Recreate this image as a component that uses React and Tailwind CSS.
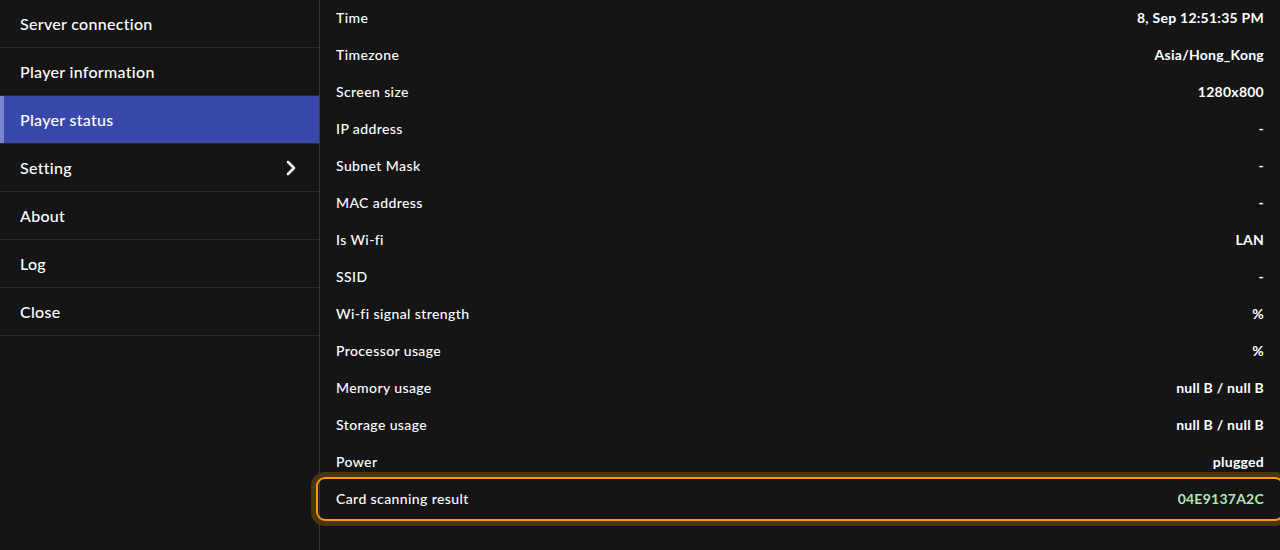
import React from "react";
import { ChevronRight } from "lucide-react";

const menu = [
  { label: "Server connection" },
  { label: "Player information" },
  { label: "Player status", active: true },
  { label: "Setting", chevron: true },
  { label: "About" },
  { label: "Log" },
  { label: "Close" },
];

const rows = [
  ["Time", "8, Sep 12:51:35 PM"],
  ["Timezone", "Asia/Hong_Kong"],
  ["Screen size", "1280x800"],
  ["IP address", "-"],
  ["Subnet Mask", "-"],
  ["MAC address", "-"],
  ["Is Wi-fi", "LAN"],
  ["SSID", "-"],
  ["Wi-fi signal strength", "%"],
  ["Processor usage", "%"],
  ["Memory usage", "null B / null B"],
  ["Storage usage", "null B / null B"],
  ["Power", "plugged"],
];

export default function App() {
  return (
    <div
      className="flex w-[1280px] h-[550px] overflow-hidden bg-[#151515] text-white"
      style={{ fontFamily: "Lato, 'Noto Sans', sans-serif" }}
    >
      <aside className="w-[320px] shrink-0 border-r border-[#3a3a3a] flex flex-col">
        {menu.map((m) => (
          <div
            key={m.label}
            className={
              m.active
                ? "relative h-[48px] flex items-center justify-between pl-[20px] pr-[16px] bg-[#3949ab] border-b border-[#2a2a2a] text-[16px] font-medium tracking-[0.3px]"
                : "relative h-[48px] flex items-center justify-between pl-[20px] pr-[16px] border-b border-[#2a2a2a] text-[16px] font-medium tracking-[0.3px]"
            }
          >
            {m.active && (
              <span className="absolute left-0 top-0 bottom-0 w-[4px] bg-[#7986cb]" />
            )}
            <span>{m.label}</span>
            {m.chevron && <ChevronRight size={24} strokeWidth={2.5} />}
          </div>
        ))}
      </aside>
      <main className="flex-1 flex flex-col">
        {rows.map(([k, v]) => (
          <div
            key={k}
            className="h-[37px] flex items-center justify-between px-[16px] pb-[2px] text-[14px]"
          >
            <span className="font-medium tracking-[0.4px]">{k}</span>
            <span className="font-bold tracking-[0.25px]">{v}</span>
          </div>
        ))}
        <div className="relative h-[37px] flex items-center justify-between px-[16px] pb-[2px] text-[14px]">
          <span className="absolute -top-[4px] -bottom-[3px] -left-[4px] -right-[4px] rounded-[9px] border-2 border-[#ff9800] shadow-[0_0_0_5px_#4b3614]" />
          <span className="relative font-medium tracking-[0.4px]">Card scanning result</span>
          <span className="relative font-bold tracking-[0.25px] text-[#aee9bd]">04E9137A2C</span>
        </div>
      </main>
    </div>
  );
}
